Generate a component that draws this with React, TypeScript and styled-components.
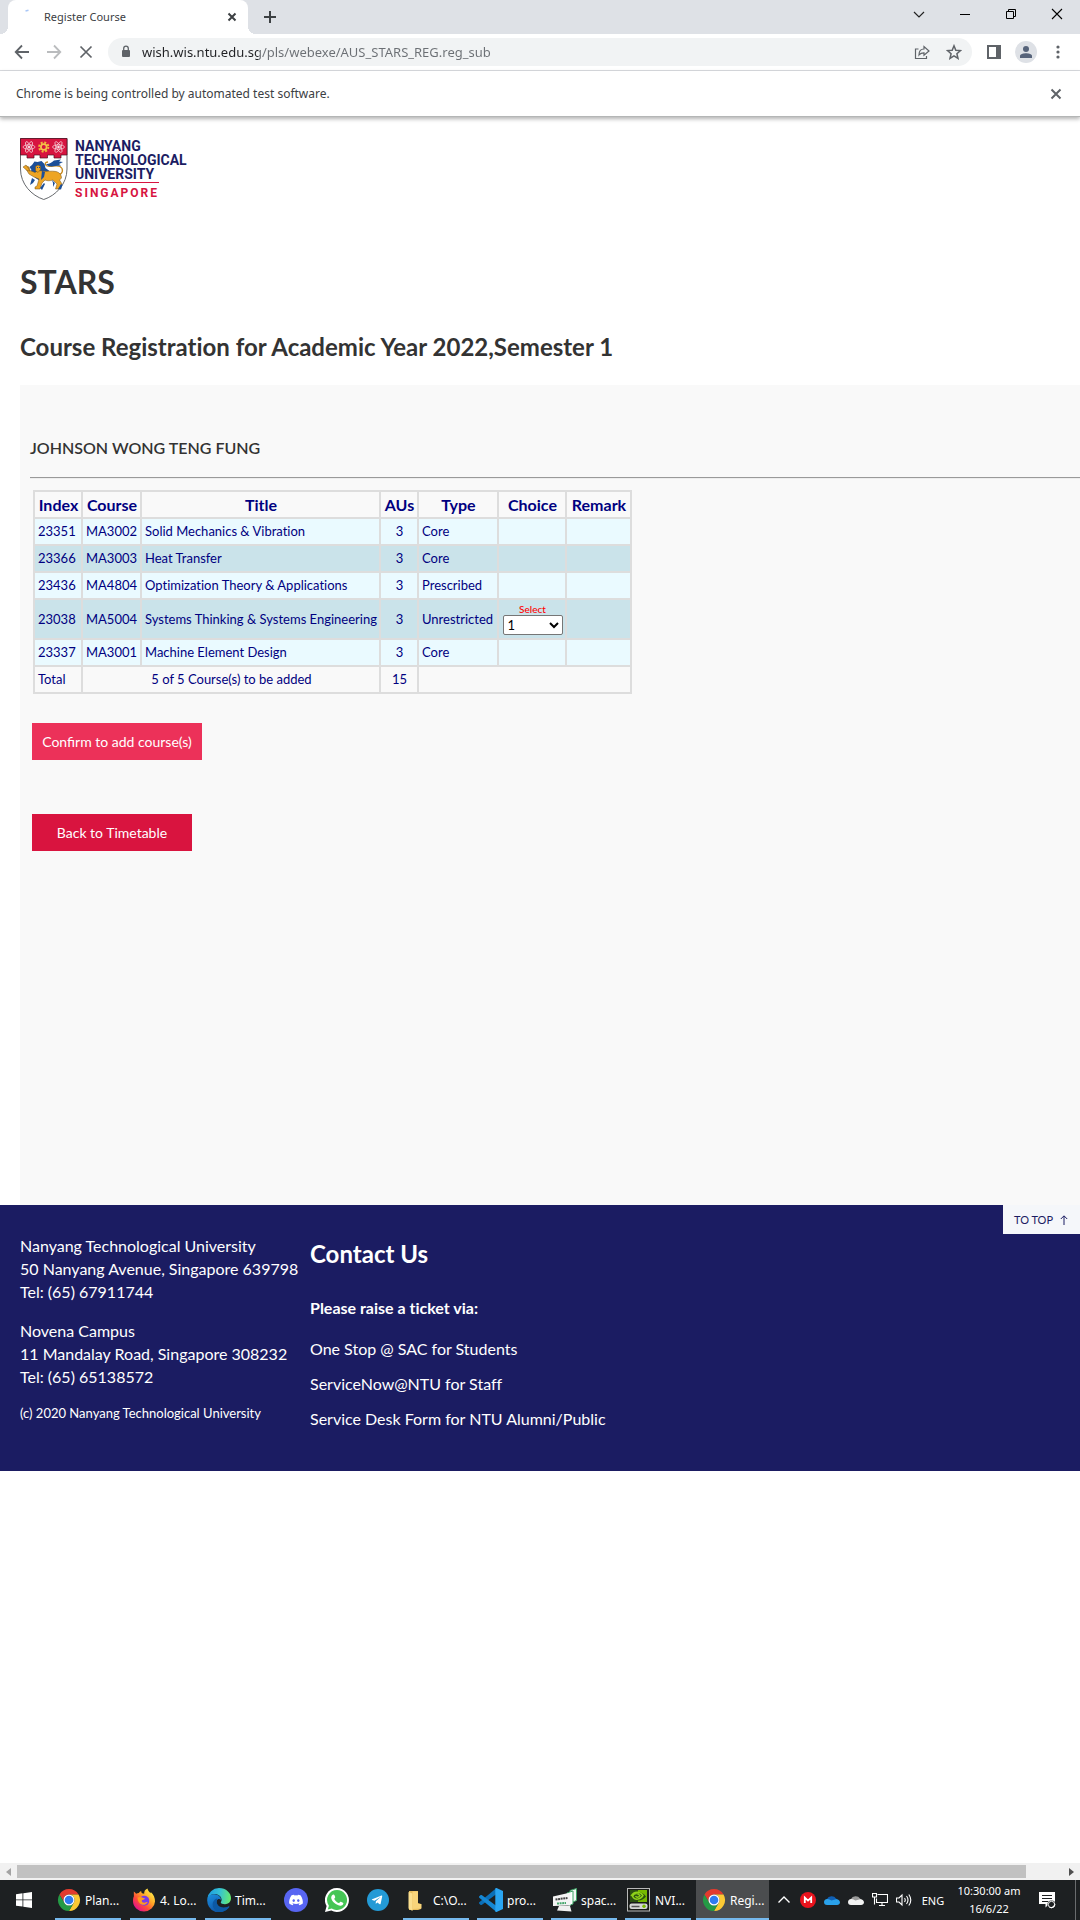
import React from "react";
import styled, { createGlobalStyle } from "styled-components";
import { FaDiscord, FaTelegramPlane } from "react-icons/fa";

const uiFont = `"Noto Sans", "Open Sans", sans-serif`;
const pageFont = `Lato, "Open Sans", sans-serif`;

const Global = createGlobalStyle`
  *, *::before, *::after { box-sizing: border-box; }
  body { margin: 0; background: #fff; }
  button, input, select { font-family: inherit; }
  h1, h2, h3, p, ul { margin: 0; padding: 0; }
`;

const Desktop = styled.div`
  display: flex;
  flex-direction: column;
  min-height: 100vh;
  font-family: ${uiFont};
  svg { display: block; flex: none; }
`;

/* ---------- browser frame ---------- */

const TabStrip = styled.header`
  display: flex;
  height: 34px;
  padding-left: 8px;
  background: #dee1e6;
`;

const Tab = styled.div`
  position: relative;
  display: flex;
  align-items: center;
  width: 240px;
  padding: 0 8px 0 16px;
  border-radius: 8px 8px 0 0;
  background: #fff;
  color: #3c4043;
  font-size: 11px;
  &::before, &::after {
    content: "";
    position: absolute;
    bottom: 0;
    width: 8px;
    height: 8px;
  }
  &::before { left: -8px; background: radial-gradient(circle at 0 0, transparent 8px, #fff 8px); }
  &::after { right: -8px; background: radial-gradient(circle at 100% 0, transparent 8px, #fff 8px); }
`;

const TabTitle = styled.span`
  flex: 1;
  padding: 0 0 2px 4px;
`;

const IconButton = styled.button<{ $w?: number; $h?: number }>`
  display: flex;
  flex: none;
  align-items: center;
  justify-content: center;
  width: ${(p) => p.$w ?? 32}px;
  height: ${(p) => p.$h ?? 28}px;
  padding: 0;
  border: 0;
  background: none;
  color: #5f6368;
`;

const NewTabSlot = styled.div`
  display: flex;
  align-items: center;
  flex: 1;
  padding-left: 8px;
`;

const WindowButtons = styled.div`
  display: flex;
`;

const Toolbar = styled.div`
  display: flex;
  align-items: center;
  height: 37px;
  padding: 0 6px;
  border-bottom: 1px solid #dadce0;
  background: #fff;
`;

const AddressBar = styled.div`
  display: flex;
  align-items: center;
  flex: 1;
  height: 28px;
  margin: 0 6px;
  padding: 0 2px 0 10px;
  border-radius: 14px;
  background: #f1f3f4;
`;

const AddressInput = styled.input`
  flex: 1;
  min-width: 0;
  height: 20px;
  margin-left: 8px;
  padding: 0;
  border: 0;
  outline: 0;
  font-size: 13px;
  background: linear-gradient(90deg, #202124 116px, #6b6f74 116px);
  background-clip: text;
  -webkit-background-clip: text;
  color: transparent;
`;

const Avatar = styled.span`
  display: flex;
  align-items: center;
  justify-content: center;
  width: 22px;
  height: 22px;
  border-radius: 50%;
  background: #dee1e6;
`;

const InfoBar = styled.div`
  position: relative;
  display: flex;
  align-items: center;
  justify-content: space-between;
  height: 46px;
  padding: 0 8px 0 16px;
  border-bottom: 1px solid #b4b6b6;
  box-shadow: 0 2px 4px rgba(0, 0, 0, 0.3);
  background: #fff;
  color: #3c4043;
  font-size: 12px;
`;

/* ---------- web page ---------- */

const Page = styled.main`
  flex: 1;
  font-family: ${pageFont};
  font-variant-ligatures: none;
  color: #333;
`;

const Masthead = styled.div`
  padding: 21px 0 0 20px;
`;

const Brand = styled.a`
  display: flex;
  gap: 7px;
  height: 62px;
  text-decoration: none;
`;

const BrandName = styled.span`
  display: flex;
  flex-direction: column;
  padding-top: 1px;
  font-family: Roboto, "Open Sans", sans-serif;
  font-weight: 700;
  font-size: 14px;
  line-height: 14px;
  color: #1b1c62;
`;

const BrandCountry = styled.span`
  align-self: flex-start;
  margin-top: 1px;
  padding-top: 3px;
  border-top: 1px solid #d71440;
  font-size: 12px;
  letter-spacing: 2px;
  color: #d71440;
`;

const PageTitle = styled.h1`
  margin-top: 62px;
  font-size: 32px;
  line-height: 40px;
  font-weight: 700;
`;

const PageSubtitle = styled.h2`
  margin-top: 29px;
  font-size: 24px;
  line-height: 32px;
  font-weight: 700;
`;

const Panel = styled.section`
  min-height: 820px;
  margin: 22px 0 0 20px;
  padding: 51px 0 0 10px;
  background: #f9f9f9;
`;

const StudentName = styled.p`
  font-size: 16px;
  line-height: 24px;
  font-weight: 600;
`;

const Rule = styled.hr`
  height: 2px;
  margin: 17px 0 11px;
  border: 0;
  border-top: 1px solid #9a9a9a;
  border-bottom: 1px solid #eee;
`;

const CourseTable = styled.table`
  margin-left: 3px;
  border-collapse: collapse;
  font-size: 13px;
  line-height: 19px;
  color: #000080;
  th, td {
    height: 27px;
    padding: 3px 2px 3px 3px;
    border: 2px solid #ddd;
    white-space: nowrap;
  }
  th {
    font-size: 16px;
    font-weight: 700;
  }
`;

const CourseRow = styled.tr<{ $alt: boolean }>`
  background: ${(p) => (p.$alt ? "#cae3ea" : "#eafaff")};
`;

const Cell = styled.td<{ $center?: boolean }>`
  text-align: ${(p) => (p.$center ? "center" : "left")};
`;

const ChoiceField = styled.label`
  display: flex;
  flex-direction: column;
  align-items: center;
  font-size: 10px;
  line-height: 12px;
  font-weight: 500;
  color: #f00;
`;

const ChoiceSelect = styled.select`
  width: 60px;
  height: 20px;
  padding: 0;
  border: 1px solid #767676;
  border-radius: 2px;
  background: #fff;
  font-size: 13px;
  color: #000;
`;

const Actions = styled.div`
  display: flex;
  flex-direction: column;
  align-items: flex-start;
  gap: 54px;
  padding: 29px 0 0 2px;
`;

const ActionButton = styled.button<{ $tone: string; $w: number }>`
  width: ${(p) => p.$w}px;
  height: 37px;
  padding: 0;
  border: 0;
  background: ${(p) => p.$tone};
  color: #fff;
  font-size: 14px;
`;

const Footer = styled.footer`
  display: flex;
  align-items: flex-start;
  min-height: 266px;
  padding-left: 20px;
  background: #1b1c62;
  color: #fff;
  font-size: 16px;
  line-height: 23px;
`;

const AddressColumn = styled.address`
  display: flex;
  flex-direction: column;
  gap: 16px;
  min-width: 290px;
  padding-top: 29px;
  font-style: normal;
  white-space: nowrap;
`;

const Copyright = styled.p`
  font-size: 13px;
  line-height: 19px;
`;

const ContactColumn = styled.div`
  display: flex;
  flex-direction: column;
  padding-top: 33px;
`;

const ContactTitle = styled.h2`
  font-size: 24px;
  line-height: 32px;
  font-weight: 700;
`;

const ContactLead = styled.h3`
  margin: 26px 0 18px;
  font-size: 16px;
  line-height: 23px;
  font-weight: 700;
`;

const ContactLinks = styled.ul`
  display: flex;
  flex-direction: column;
  gap: 12px;
  list-style: none;
  a { color: inherit; text-decoration: none; }
`;

const ToTop = styled.a`
  display: flex;
  align-items: center;
  gap: 7px;
  height: 29px;
  margin-left: auto;
  padding: 0 12px 0 11px;
  background: #f5f7fa;
  color: #1b1c62;
  font-size: 11px;
  text-decoration: none;
`;

const ScrollTrack = styled.div`
  display: flex;
  align-items: center;
  height: 17px;
  background: #f1f1f1;
`;

const ScrollThumb = styled.div`
  flex: 1;
  height: 13px;
  background: #c1c1c1;
`;

const ScrollSpace = styled.div`
  width: 37px;
`;

/* ---------- taskbar ---------- */

const Taskbar = styled.nav`
  display: flex;
  height: 40px;
  background: #1d2022;
  color: #fff;
  font-size: 12px;
`;

const StartSlot = styled.div`
  padding-right: 7px;
`;

const TaskGroup = styled.div<{ $gap: number; $end: number }>`
  display: flex;
  gap: ${(p) => p.$gap}px;
  margin-right: ${(p) => p.$end}px;
`;

const Task = styled.button<{ $active?: boolean }>`
  display: flex;
  align-items: center;
  gap: 4px;
  width: ${(p) => (p.$active ? 73 : 66)}px;
  height: 40px;
  padding: 2px 0 0 ${(p) => (p.$active ? 6 : 2)}px;
  border: 0;
  border-bottom: 2px solid #76b9ed;
  background: ${(p) => (p.$active ? "#4b4d4f" : "none")};
  color: #fff;
  font-size: 12px;
  white-space: nowrap;
`;

const Tray = styled.div`
  display: flex;
  align-items: center;
  margin: 0 4px 0 auto;
  border-right: 1px solid #6a6c6e;
  font-size: 11px;
`;

const Language = styled.span`
  width: 34px;
  text-align: center;
`;

const Clock = styled.time`
  width: 78px;
  line-height: 18px;
  text-align: center;
`;

const NoteIcon = styled.span`
  padding-right: 9px;
`;

/* ---------- drawings ---------- */

const Stroke = ({ d, size = 16, w = 2, color = "currentColor" }: { d: string; size?: number; w?: number; color?: string }) => (
  <svg width={size} height={size} viewBox={`0 0 ${size} ${size}`} fill="none" stroke={color} strokeWidth={w} aria-hidden="true">
    <path d={d} />
  </svg>
);

const ChromeLogo = () => (
  <svg width="24" height="24" viewBox="0 0 24 24" aria-hidden="true">
    <path fill="#e33b2e" d="M2.47 6.5A11 11 0 0 1 21.53 6.5H12A5.5 5.5 0 0 0 7.24 14.75Z" />
    <path fill="#fcc934" d="M21.53 6.5A11 11 0 0 1 12 23L16.76 14.75A5.5 5.5 0 0 0 12 6.5Z" />
    <path fill="#249a45" d="M12 23A11 11 0 0 1 2.47 6.5L7.24 14.75A5.5 5.5 0 0 0 16.76 14.75Z" />
    <circle cx="12" cy="12" r="5.5" fill="#fff" />
    <circle cx="12" cy="12" r="4.3" fill="#2f7bf0" />
  </svg>
);

const FirefoxLogo = () => (
  <svg width="24" height="24" viewBox="0 0 24 24" aria-hidden="true">
    <defs>
      <linearGradient id="ff-body" x1="0.9" y1="0.1" x2="0.2" y2="0.9">
        <stop offset="0" stopColor="#fff44f" />
        <stop offset="0.4" stopColor="#ffa425" />
        <stop offset="0.7" stopColor="#ff4b38" />
        <stop offset="1" stopColor="#e31587" />
      </linearGradient>
    </defs>
    <path
      fill="url(#ff-body)"
      d="M15.5.4c.3 2 1.5 3.1 3 4.8.2-.5.3-.8.2-1.3 2.8 2.4 4.5 6 4.3 9.6A11 10.5 0 0 1 12 23.5 11 10.5 0 0 1 1 13c0-2.2.3-3.6.9-4.7L1.8 3.500c.9.5 1.7 1.3 2.3 2.3.9-.6 1.7-.8 2.7-.8.6-1 1.3-1.6 2.4-2 0 1.1.3 1.7.8 2.2l2.2.5C12 3.400 13 1.300 15.500.4Z"
    />
    <circle cx="12.3" cy="12.7" r="5" fill="#7a3be8" />
    <path fill="#ff9a1f" d="M5.5 9.5c1.8-.9 3.9-.8 5.3.3 1.3.1 2.2.5 2 1-.4.9-2.6 1-2.9 1.5-.4 1.3.3 2.5 2.6 2.4 1.3-.1 1.9-.9 3.2-.7-1.1 2.300-3.200 3.200-5.500 2.700-3-.7-4.500-3.400-4.700-7.200Z" />
  </svg>
);

const EdgeLogo = () => (
  <svg width="24" height="24" viewBox="0 0 24 24" aria-hidden="true">
    <defs>
      <linearGradient id="edge-top" x1="0" y1="0.4" x2="1" y2="0.5">
        <stop offset="0" stopColor="#1b9de2" />
        <stop offset="0.5" stopColor="#35c1d5" />
        <stop offset="1" stopColor="#66eb6e" />
      </linearGradient>
      <linearGradient id="edge-side" x1="0" y1="0" x2="0.6" y2="1">
        <stop offset="0" stopColor="#1b8fe0" />
        <stop offset="1" stopColor="#0f4fa0" />
      </linearGradient>
    </defs>
    <path fill="url(#edge-side)" d="M.3 11C1 7.6 5 5.6 9 6.5c3.5.8 5.2 3.3 5 5.5-1.3-1.5-3.4-1.4-4.3 1-1.1 3.6 3 7.6 8.3 6.8 1.6-.2 2.8-.9 3.7-1.3.5-.2.8.2.5.6A12 12 0 0 1 .3 11Z" />
    <path fill="#0c59a4" d="M9.5 10.5c-5 2.3-5.5 9.3.5 13C17 24.8 21 21 22.2 19c.2-.4-.1-.7-.5-.5-5 2.4-10.5.6-11.7-3-.6-1.8-.3-3.3.5-4.4Z" />
    <path fill="url(#edge-top)" d="M.3 11A12 12 0 0 1 12 0c7.2 0 12 5 12 10 0 4.1-3 6.2-6 6.2-2.3 0-4.2-.8-4.2-1.7 0-.5.8-1.1.8-2.7C14.6 8.7 11.4 6 7.5 6 4.2 6 1.3 8 .3 11Z" />
  </svg>
);

const DiscordLogo = () => (
  <svg width="24" height="24" viewBox="0 0 24 24" aria-hidden="true">
    <circle cx="12" cy="12" r="12" fill="#5865f2" />
    <FaDiscord x="4.5" y="4.5" size={15} color="#fff" />
  </svg>
);

const WhatsAppLogo = () => (
  <svg width="24" height="24" viewBox="0 0 24 24" aria-hidden="true">
    <path fill="#fff" d="M12 0a12 12 0 1 1-5.7 22.6L0 24l1.6-6A12 12 0 0 1 12 0Z" />
    <path fill="#45c655" d="M12.1 2a10 10 0 1 1-5.3 18.5L2.8 21.5l1.1-3.8A10 10 0 0 1 12.1 2Z" />
    <path fill="#fff" d="M8.2 6.4c.6-.1 1 .1 1.2.6l.8 1.9c.1.4 0 .6-.8 1.6-.2.3-.1.5 0 .7 1.1 1.9 2.4 3 4.3 3.8.3.1.5.1.7-.2.9-1.1 1-1.3 1.5-1.1l2 1c.5.2.5.5.4 1.1-.3 1.3-1.8 2.1-3.2 1.9-4.6-.8-8.3-4.4-8.9-7.7-.2-1.5.9-3.4 2-3.6Z" />
  </svg>
);

const TelegramLogo = () => (
  <svg width="22" height="22" viewBox="0 0 22 22" aria-hidden="true">
    <circle cx="11" cy="11" r="11" fill="#239ad6" />
    <FaTelegramPlane x="4" y="5" size={12} color="#fff" />
  </svg>
);

const FolderLogo = () => (
  <svg width="24" height="24" viewBox="0 0 24 24" aria-hidden="true">
    <path fill="#e8bd5c" d="M4 3h9v12l3 1v5l-3 1H4Z" />
    <path fill="#fbdf8f" d="M3.5 4l4 1.5V23l-4-2.5Z" />
    <path fill="#f8d47a" d="M7.5 3.5H13V16h3.5v4.5L7.5 21Z" />
  </svg>
);

const CodeLogo = () => (
  <svg width="24" height="24" viewBox="0 0 24 24" aria-hidden="true">
    <path fill="#0b6fb8" d="M1.4 16.8.3 15.7c-.4-.4-.4-1 0-1.4L17.5 0v6L3 16.8c-.5.4-1.2.4-1.6 0Z" />
    <path fill="#1587d4" d="M1.4 7.2.3 8.3c-.4.4-.4 1 0 1.4L17.5 24v-6L3 7.2c-.5-.4-1.2-.4-1.6 0Z" />
    <path fill="#2aa5f2" d="M17.5 0 24 3v18l-6.5 3c-.8.1-1.2-.3-1.2-.8V.8c0-.5.4-.9 1.2-.8Z" />
  </svg>
);

const SpaceDeskLogo = () => (
  <svg width="24" height="24" viewBox="0 0 24 24" aria-hidden="true">
    <path fill="#f3f6f4" stroke="#3fa265" strokeWidth="1" d="M17 2.500 23.500.5v12L20 14l-3-3Z" />
    <path fill="#fff" stroke="#3fa265" strokeWidth="1" d="M14 5l6-2v13l-4 1.500-2-3Z" />
    <path fill="#f4f4f4" d="M0 8.5 17.5 4.5v13L0 18Z" />
    <path fill="#f0f0f0" d="M6 18h11l1.5 5.5L4 22.5Z" />
    <path stroke="#444" strokeWidth="2" strokeDasharray="2 0.6" d="M2.5 11.5l12-1.5" />
    <path stroke="#45a66b" strokeWidth="2" strokeDasharray="2 0.6" d="M4 15.5l9-.5" />
  </svg>
);

const NvidiaLogo = () => (
  <svg width="24" height="24" viewBox="0 0 24 24" aria-hidden="true">
    <rect x="0.5" y="0.5" width="22" height="22.5" fill="#181b18" stroke="#b8b8b8" />
    <rect x="3" y="2" width="17" height="12" fill="#2c5012" />
    <path fill="#76b900" d="M11 2h9v12h-9v-1.5c4 0 6.5-2 8-4-2-3-5-4.5-8-4.5Z" />
    <path fill="none" stroke="#8fd318" strokeWidth="1.4" d="M4 8c3-5 9-5 12-.5-3 4.5-8 5-10.5.8 2-3.5 5.5-3.3 7.5-.6-1.5 2-3.5 2-4.5.5" />
    <rect x="2.5" y="15.5" width="18" height="5.5" rx="2" fill="#d5d5d5" />
    <path stroke="#555" strokeWidth="1.5" d="M4.5 18.5h8" />
    <circle cx="17" cy="18.3" r="1.7" fill="#76b900" />
  </svg>
);

const Atom = ({ x }: { x: number }) => (
  <g transform={`translate(${x} 9)`} fill="none" stroke="#f6dfe4" strokeWidth="0.7">
    <ellipse rx="6" ry="2.2" />
    <ellipse rx="6" ry="2.2" transform="rotate(60)" />
    <ellipse rx="6" ry="2.2" transform="rotate(-60)" />
    <circle r="1" fill="#fff" />
  </g>
);

const Crest = () => (
  <svg width="48" height="62" viewBox="0 0 48 62" role="img" aria-label="University crest">
    <path fill="#fff" stroke="#55585c" strokeWidth="0.9" d="M.5.5h46.500V31C47 46 36 57.500 23.750 61.500 11.500 57.500.5 46 .5 31Z" />
    <path fill="#d71440" stroke="#4b1020" strokeWidth="0.7" d="M.5.5h46.500v16.500H41v3h-7v-3h-6.500v3h-7.500v-3H14v3H7v-3H.5Z" />
    <Atom x={9} />
    <Atom x={38.5} />
    <circle cx="23.75" cy="9" r="4.6" fill="none" stroke="#f0b93a" strokeWidth="2" strokeDasharray="2 1.6" />
    <circle cx="23.75" cy="9" r="3.7" fill="#f5c34a" />
    <circle cx="23.75" cy="9" r="2" fill="#d71440" />
    <path fill="none" stroke="#c78a20" strokeWidth="1.3" d="M38 37c5-1 6-6 2-8.500-4-2-9 1-13-.5-3-1.500-2-4 1-4" />
    <path fill="#1c4f98" d="M26 26c3 .5 5-1 8-3.500l7-1-2 2 4 .5-4 2 2 1.500-6 .5c-3 .8-7 .8-9-2Z" />
    <path fill="#1c4f98" d="M12 27l2.500-3.500 3 .5 4-1 3 3 1 4 4 3-5 2 3 5-6-1-3 3-3-2-3-3-3-2 2-3-2-3Z" />
    <path fill="#eda525" stroke="#73511a" strokeWidth="0.5" d="M22 33c5 1 9-.5 14 .5 4 1 5.500 4 5.500 6.500l-2 2 2.500 4-2.500 5h-4l1.500-5-4-4c-3 1-6 1-8 0l-3 3-2 6h-5v-2l2-1 2-7-5-2-5-3-3-5 .5-3 2.500 1 1 3.500 5 2 3-2Z" />
    <path fill="#eda525" stroke="#73511a" strokeWidth="0.5" d="M15.500 28.500l2.500-1.500 2.500 1.500v3l-2.500 3-2.500-2ZM3 29l3-2 1.500 2L10 33l-3-.5Z" />
    <path fill="#1c4f98" d="M17 29h1v1h-1zM19 29h1v1h-1zM20 50l4-5 1 1-3 6ZM38 51l3-5 1.500 1-1.500 4.500Z" />
    <path fill="#1c4f98" d="M12 40l3 2-2 3-3 2ZM32 42l3 3-2 4 0-4ZM22 33l3 1-1 5-3 3Z" />
  </svg>
);

/* ---------- data ---------- */

type Course = { index: string; code: string; title: string; aus: number; type: string; choice?: boolean };

const courses: Course[] = [
  { index: "23351", code: "MA3002", title: "Solid Mechanics & Vibration", aus: 3, type: "Core" },
  { index: "23366", code: "MA3003", title: "Heat Transfer", aus: 3, type: "Core" },
  { index: "23436", code: "MA4804", title: "Optimization Theory & Applications", aus: 3, type: "Prescribed" },
  { index: "23038", code: "MA5004", title: "Systems Thinking & Systems Engineering", aus: 3, type: "Unrestricted", choice: true },
  { index: "23337", code: "MA3001", title: "Machine Element Design", aus: 3, type: "Core" },
];

const columns: [string, number][] = [
  ["Index", 48],
  ["Course", 59],
  ["Title", 239],
  ["AUs", 38],
  ["Type", 80],
  ["Choice", 68],
  ["Remark", 65],
];

export default function App() {
  return (
    <Desktop>
      <Global />
      <TabStrip>
        <Tab>
          <svg width="16" height="16" viewBox="0 0 16 16" aria-hidden="true">
            <path d="M1.5 2l3-.8" stroke="#a9c7f7" strokeWidth="1.5" />
          </svg>
          <TabTitle>Register Course</TabTitle>
          <IconButton $w={16} $h={16} aria-label="Close tab">
            <Stroke d="M4.500 4.500l7 7M11.500 4.500l-7 7" w={2} color="#3c4043" />
          </IconButton>
        </Tab>
        <NewTabSlot>
          <IconButton $w={28} aria-label="New tab">
            <Stroke d="M8 2v12M2 8h12" color="#3c4043" />
          </IconButton>
        </NewTabSlot>
        <WindowButtons>
          <IconButton $w={46} aria-label="Search tabs">
            <Stroke d="M3 6l5 5 5-5" w={1.2} color="#222" />
          </IconButton>
          <IconButton $w={46} aria-label="Minimise">
            <Stroke d="M3 8.500h10" w={1} color="#000" />
          </IconButton>
          <IconButton $w={46} aria-label="Restore">
            <Stroke d="M3.500 5.500h7v7h-7zM5.500 5.500v-2h7v7h-2" w={1} color="#000" />
          </IconButton>
          <IconButton $w={46} aria-label="Close window">
            <Stroke d="M3 3l10 10M13 3L3 13" w={1.1} color="#000" />
          </IconButton>
        </WindowButtons>
      </TabStrip>

      <Toolbar>
        <IconButton aria-label="Back">
          <Stroke d="M15 8H2M8 1.500L1.700 8 8 14.500" w={1.8} />
        </IconButton>
        <IconButton aria-label="Forward">
          <Stroke d="M1 8h13M8 1.500L14.300 8 8 14.500" w={1.8} color="#babcbe" />
        </IconButton>
        <IconButton aria-label="Stop loading">
          <Stroke d="M2.500 2.500l11 11M13.500 2.500l-11 11" w={1.7} />
        </IconButton>
        <AddressBar>
          <svg width="16" height="16" viewBox="0 0 16 16" aria-hidden="true">
            <rect x="4" y="6" width="8" height="7" rx="1" fill="#5f6368" />
            <path d="M5.7 6V4.5a2.3 2.3 0 0 1 4.6 0V6" fill="none" stroke="#5f6368" strokeWidth="1.3" />
          </svg>
          <AddressInput aria-label="Address" readOnly value="wish.wis.ntu.edu.sg/pls/webexe/AUS_STARS_REG.reg_sub" />
          <IconButton aria-label="Share">
            <Stroke d="M4.500 5h-3v9.500h11V12M5 11c0-4 2-6 5-6V2.500L15 7l-5 4.300V8.800C8 8.800 6.500 9 5 11Z" w={1.2} />
          </IconButton>
          <IconButton aria-label="Bookmark">
            <Stroke d="M8 1.800l1.800 4.400 4.700.4-3.600 3.100 1.100 4.600L8 11.800l-4 2.500 1.100-4.600L1.500 6.600l4.700-.4Z" w={1.5} />
          </IconButton>
        </AddressBar>
        <IconButton aria-label="Side panel">
          <svg width="14" height="14" viewBox="0 0 14 14" aria-hidden="true">
            <path fill="#5f6368" fillRule="evenodd" d="M0 0h14v14H0ZM2 2v10h7V2Z" />
          </svg>
        </IconButton>
        <IconButton aria-label="Profile">
          <Avatar>
            <svg width="12" height="12" viewBox="0 0 12 12" fill="#56637a" aria-hidden="true">
              <circle cx="6" cy="3" r="3" />
              <path d="M0 12v-2c0-2 3.5-2.8 6-2.8s6 .8 6 2.8v2Z" />
            </svg>
          </Avatar>
        </IconButton>
        <IconButton aria-label="Menu">
          <svg width="16" height="16" viewBox="0 0 16 16" fill="#5f6368" aria-hidden="true">
            <circle cx="8" cy="3" r="1.6" />
            <circle cx="8" cy="8" r="1.6" />
            <circle cx="8" cy="13" r="1.6" />
          </svg>
        </IconButton>
      </Toolbar>

      <InfoBar>
        <span>Chrome is being controlled by automated test software.</span>
        <IconButton aria-label="Dismiss">
          <Stroke d="M3.500 3.500l9 9M12.500 3.500l-9 9" w={2} />
        </IconButton>
      </InfoBar>

      <Page>
        <Masthead>
          <Brand href="#top">
            <Crest />
            <BrandName>
              <span>NANYANG</span>
              <span>TECHNOLOGICAL</span>
              <span>UNIVERSITY</span>
              <BrandCountry>SINGAPORE</BrandCountry>
            </BrandName>
          </Brand>
          <PageTitle>STARS</PageTitle>
          <PageSubtitle>Course Registration for Academic Year 2022,Semester 1</PageSubtitle>
        </Masthead>

        <Panel>
          <StudentName>JOHNSON WONG TENG FUNG</StudentName>
          <Rule />
          <CourseTable>
            <colgroup>
              {columns.map(([name, width]) => (
                <col key={name} width={width} />
              ))}
            </colgroup>
            <thead>
              <tr>
                {columns.map(([name]) => (
                  <th key={name} scope="col">{name}</th>
                ))}
              </tr>
            </thead>
            <tbody>
              {courses.map((c, i) => (
                <CourseRow key={c.index} $alt={i % 2 === 1}>
                  <Cell>{c.index}</Cell>
                  <Cell>{c.code}</Cell>
                  <Cell>{c.title}</Cell>
                  <Cell $center>{c.aus}</Cell>
                  <Cell>{c.type}</Cell>
                  <Cell>
                    {c.choice && (
                      <ChoiceField>
                        Select
                        <ChoiceSelect defaultValue="1">
                          <option>1</option>
                          <option>2</option>
                        </ChoiceSelect>
                      </ChoiceField>
                    )}
                  </Cell>
                  <Cell />
                </CourseRow>
              ))}
              <tr>
                <Cell>Total</Cell>
                <Cell $center colSpan={2}>5 of 5 Course(s) to be added</Cell>
                <Cell $center>15</Cell>
                <Cell colSpan={3} />
              </tr>
            </tbody>
          </CourseTable>
          <Actions>
            <ActionButton $tone="#ec3159" $w={170}>Confirm to add course(s)</ActionButton>
            <ActionButton $tone="#d9143f" $w={160}>Back to Timetable</ActionButton>
          </Actions>
        </Panel>

        <Footer>
          <AddressColumn>
            <p>
              Nanyang Technological University<br />
              50 Nanyang Avenue, Singapore 639798<br />
              Tel: (65) 67911744
            </p>
            <p>
              Novena Campus<br />
              11 Mandalay Road, Singapore 308232<br />
              Tel: (65) 65138572
            </p>
            <Copyright>(c) 2020 Nanyang Technological University</Copyright>
          </AddressColumn>
          <ContactColumn>
            <ContactTitle>Contact Us</ContactTitle>
            <ContactLead>Please raise a ticket via:</ContactLead>
            <ContactLinks>
              <li><a href="#students">One Stop @ SAC for Students</a></li>
              <li><a href="#staff">ServiceNow@NTU for Staff</a></li>
              <li><a href="#alumni">Service Desk Form for NTU Alumni/Public</a></li>
            </ContactLinks>
          </ContactColumn>
          <ToTop href="#top">
            TO TOP
            <svg width="8" height="10" viewBox="0 0 8 10" fill="none" stroke="#1b1c62" aria-hidden="true">
              <path d="M4 10V1M.8 4L4 .8 7.2 4" />
            </svg>
          </ToTop>
        </Footer>
      </Page>

      <ScrollTrack>
        <IconButton $w={17} $h={17} aria-label="Scroll left">
          <svg width="5" height="8" viewBox="0 0 5 8" aria-hidden="true"><path fill="#a3a3a3" d="M5 0v8L0 4Z" /></svg>
        </IconButton>
        <ScrollThumb />
        <ScrollSpace />
        <IconButton $w={17} $h={17} aria-label="Scroll right">
          <svg width="5" height="8" viewBox="0 0 5 8" aria-hidden="true"><path fill="#505050" d="M0 0v8l5-4Z" /></svg>
        </IconButton>
      </ScrollTrack>

      <Taskbar>
        <StartSlot>
          <IconButton $w={48} $h={40} aria-label="Start">
            <svg width="16" height="16" viewBox="0 0 16 16" fill="#fff" aria-hidden="true">
              <path d="M0 2.2l6.5-.9v6.2H0ZM7.3 1.2L16 0v7.5H7.3ZM0 8.3h6.5v6.3L0 13.7ZM7.3 8.3H16V16l-8.7-1.2Z" />
            </svg>
          </IconButton>
        </StartSlot>
        <TaskGroup $gap={9} $end={4}>
          <Task><ChromeLogo />Plan...</Task>
          <Task><FirefoxLogo />4. Lo...</Task>
          <Task><EdgeLogo />Tim...</Task>
        </TaskGroup>
        <TaskGroup $gap={0} $end={5}>
          <IconButton $w={41} $h={40} aria-label="Discord"><DiscordLogo /></IconButton>
          <IconButton $w={41} $h={40} aria-label="WhatsApp"><WhatsAppLogo /></IconButton>
          <IconButton $w={41} $h={40} aria-label="Telegram"><TelegramLogo /></IconButton>
        </TaskGroup>
        <TaskGroup $gap={8} $end={5}>
          <Task><FolderLogo />C:\O...</Task>
          <Task><CodeLogo />pro...</Task>
          <Task><SpaceDeskLogo />spac...</Task>
          <Task><NvidiaLogo />NVI...</Task>
        </TaskGroup>
        <Task $active><ChromeLogo />Regi...</Task>

        <Tray>
          <IconButton $w={24} aria-label="Show hidden icons">
            <Stroke d="M2.500 10.500L8 5l5.500 5.500" w={1.4} color="#fff" />
          </IconButton>
          <IconButton $w={24} aria-label="MEGA">
            <svg width="16" height="16" viewBox="0 0 16 16" aria-hidden="true">
              <circle cx="8" cy="8" r="8" fill="#e9131d" />
              <path d="M4.8 11V5.5L8 8.6l3.2-3.1V11" fill="none" stroke="#fff" strokeWidth="1.8" />
            </svg>
          </IconButton>
          <IconButton $w={24} aria-label="OneDrive">
            <svg width="16" height="12" viewBox="0 0 16 12" aria-hidden="true">
              <path fill="#0f5fb4" d="M3 5a5 4.5 0 0 1 9-.5L15 7l-12 2Z" />
              <path fill="#2aa1ea" d="M0 8a3 3 0 0 1 3.5-3c1.5 0 2.5.8 4 1.5L12 5.3A3.3 3.3 0 0 1 16 8.3 3 3 0 0 1 13 11H3A3 3 0 0 1 0 8Z" />
            </svg>
          </IconButton>
          <IconButton $w={24} aria-label="OneDrive personal">
            <svg width="16" height="12" viewBox="0 0 16 12" aria-hidden="true">
              <path fill="#9a9a9a" d="M3 5a5 4.5 0 0 1 9-.5L15 7l-12 2Z" />
              <path fill="#f2f2f2" d="M0 8a3 3 0 0 1 3.5-3c1.5 0 2.5.8 4 1.5L12 5.3A3.3 3.3 0 0 1 16 8.3 3 3 0 0 1 13 11H3A3 3 0 0 1 0 8Z" />
            </svg>
          </IconButton>
          <IconButton $w={24} aria-label="Network">
            <Stroke d="M5.500 2.500h10v8h-11v-4M.5 1.500h4v3.500h-4zM2.500 5v7.500M7 13.500h6M10 10.500v3" w={1.1} color="#fff" />
          </IconButton>
          <IconButton $w={24} aria-label="Volume">
            <Stroke d="M.5 6h2.500l3-3v10l-3-3H.5ZM8.500 6q1.500 2 0 4M10.500 4q3 4 0 8M12.800 2.500q4 5.500 0 11" w={1.1} color="#fff" />
          </IconButton>
          <Language>ENG</Language>
          <Clock>10:30:00 am<br />16/6/22</Clock>
          <IconButton $w={47} aria-label="Notifications">
            <NoteIcon>
              <svg width="17" height="17" viewBox="0 0 17 17" aria-hidden="true">
                <path fill="#fff" d="M0 0h16v12h-6l-3.5 3.5V12H0Z" />
                <path stroke="#1d2022" strokeWidth="1.2" d="M3 3.5h10M3 6.5h10M3 9.5h6" />
                <circle cx="12.5" cy="12.5" r="4" fill="#1d2022" />
                <path fill="#fff" d="M9.5 14.5a3.6 3.6 0 0 0 6-4 4 4 0 0 1-6 4Z" />
                <circle cx="12.5" cy="12.5" r="3.2" fill="none" stroke="#fff" strokeWidth="0.9" />
              </svg>
            </NoteIcon>
          </IconButton>
        </Tray>
      </Taskbar>
    </Desktop>
  );
}
